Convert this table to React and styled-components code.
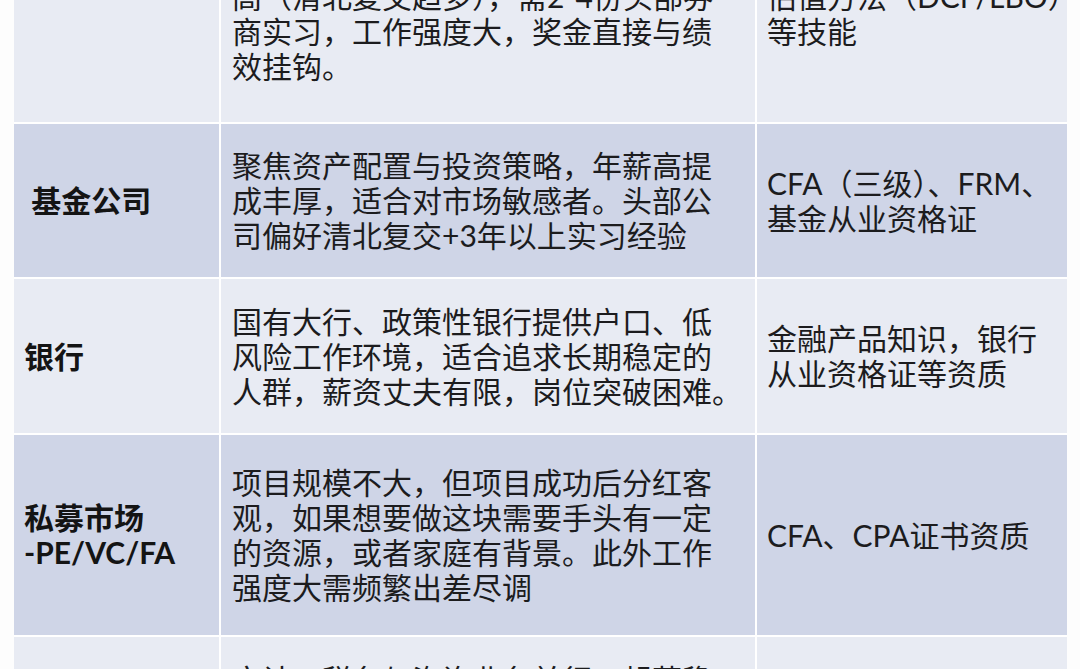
import React from "react";
import styled, { createGlobalStyle } from "styled-components";

const GlobalStyle = createGlobalStyle`
  html, body {
    margin: 0;
    padding: 0;
    background: #fdfdfd;
  }
  body {
    font-family: "Lato", "Noto Sans CJK SC", sans-serif;
    color: #1b1b1b;
  }
`;

const rows = [
  {
    tone: "light",
    height: 287,
    label: ["投资银行"],
    desc: [
      "负责IPO、并购重组、债券承销等资本",
      "运作项目，薪酬水平位居前列，但门",
      "槛极高，对学历与实习经历要求很",
      "高（清北复交趋多），需2-4份头部券",
      "商实习，工作强度大，奖金直接与绩",
      "效挂钩。",
    ],
    req: ["CPA、CFA、保荐代表人", "资格，熟练掌握财务建模", "估值方法（DCF/LBO）", "等技能"],
  },
  {
    tone: "dark",
    height: 153,
    label: [" 基金公司"],
    desc: [
      "聚焦资产配置与投资策略，年薪高提",
      "成丰厚，适合对市场敏感者。头部公",
      "司偏好清北复交+3年以上实习经验",
    ],
    req: ["CFA（三级）、FRM、", "基金从业资格证"],
  },
  {
    tone: "light",
    height: 154,
    label: ["银行"],
    desc: [
      "国有大行、政策性银行提供户口、低",
      "风险工作环境，适合追求长期稳定的",
      "人群，薪资丈夫有限，岗位突破困难。",
    ],
    req: ["金融产品知识，银行", "从业资格证等资质"],
  },
  {
    tone: "dark",
    height: 200,
    label: ["私募市场", "-PE/VC/FA"],
    desc: [
      "项目规模不大，但项目成功后分红客",
      "观，如果想要做这块需要手头有一定",
      "的资源，或者家庭有背景。此外工作",
      "强度大需频繁出差尽调",
    ],
    req: ["CFA、CPA证书资质"],
  },
  {
    tone: "light",
    height: 190,
    label: ["四大会计师", "事务所/咨询", "公司"],
    desc: [
      "审计、税务与咨询业务并行，起薪稳",
      "定，晋升路径清晰，适合作为职业起",
      "点积累经验，忙季加班较多，跳槽至",
      "企业或券商的机会多",
    ],
    req: ["CPA、ACCA等", "专业资格证书"],
  },
];

export default function App() {
  return (
    <>
      <GlobalStyle />
      <Page>
        <Table>
          {rows.map((row, i) => (
            <Row key={i} $h={row.height}>
              <Cell $tone={row.tone} $pad={10}>
                {row.label.map((line, j) => (
                  <Label key={j}>{line}</Label>
                ))}
              </Cell>
              <Cell $tone={row.tone} $pad={11}>
                {row.desc.map((line, j) => (
                  <Line key={j}>{line}</Line>
                ))}
              </Cell>
              <Cell $tone={row.tone} $pad={10}>
                {row.req.map((line, j) => (
                  <Line key={j}>{line}</Line>
                ))}
              </Cell>
            </Row>
          ))}
        </Table>
      </Page>
    </>
  );
}

const Page = styled.main`
  height: 669px;
  overflow: hidden;
  padding-left: 14px;
  background: #fdfdfd;
`;

const Table = styled.section`
  display: flex;
  flex-direction: column;
  gap: 2px;
  width: 1053px;
  margin-top: -165px;
  background: #ffffff;
`;

const Row = styled.div`
  display: grid;
  grid-template-columns: 205px 534px 310px;
  column-gap: 2px;
  height: ${(p) => p.$h}px;
  flex-shrink: 0;
`;

const Cell = styled.div`
  display: flex;
  flex-direction: column;
  justify-content: center;
  padding: 0 ${(p) => p.$pad}px;
  background: ${(p) => (p.$tone === "dark" ? "#cfd5e7" : "#e8ebf3")};
  overflow: hidden;
`;

const Line = styled.div`
  font-size: 30px;
  line-height: 35px;
  white-space: pre;
  color: #1c1c1e;
`;

const Label = styled(Line)`
  font-weight: 700;
  color: #141414;
`;
